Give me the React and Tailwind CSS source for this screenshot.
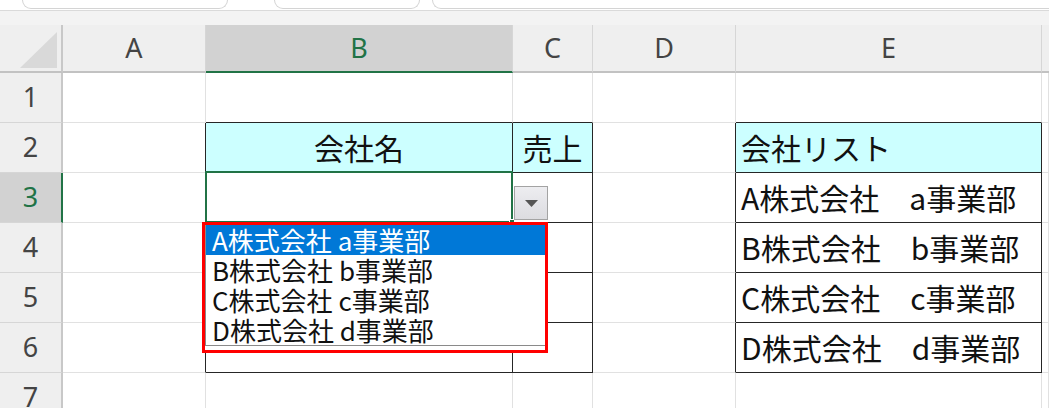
const cols = ["A", "B", "C", "D", "E"];

const companies = [
  ["A株式会社 a事業部", "A株式会社　a事業部"],
  ["B株式会社 b事業部", "B株式会社　b事業部"],
  ["C株式会社 c事業部", "C株式会社　c事業部"],
  ["D株式会社 d事業部", "D株式会社　d事業部"],
];

const grid = "grid grid-cols-[63px_143px_307px_80px_143px_306px_7px]";
const plain = "h-[50px] border-r border-b border-[#e1e1e1]";

function RowHead({ n, active }) {
  return (
    <div
      className={
        active
          ? "h-[50px] flex items-center justify-center bg-[#d2d2d2] text-[#217346] border-r-2 border-r-[#217346] border-b border-b-[#d6d6d6] text-[27px]"
          : "h-[50px] flex items-center justify-center bg-[#efefef] text-[#444] border-r-2 border-r-[#c8c8c8] border-b border-b-[#d6d6d6] text-[27px]"
      }
      style={{ fontFamily: "'Noto Sans', sans-serif" }}
    >
      {n}
    </div>
  );
}

export default function App() {
  return (
    <div className="relative w-[1049px] h-[408px] overflow-hidden bg-white font-['Noto_Sans_CJK_JP',sans-serif] text-[#111]">
      {/* top strip */}
      <div className="flex h-[10px]">
        <div className="ml-[22px] w-[206px] h-[9px] border-x border-b border-[#d4d4d4] rounded-b-[9px]" />
        <div className="ml-[46px] w-[146px] h-[9px] border-x border-b border-[#d4d4d4] rounded-b-[9px]" />
        <div className="ml-[12px] flex-1 h-[9px] border-l border-b border-[#d4d4d4] rounded-bl-[9px]" />
      </div>
      <div className="h-[15px] bg-[#f3f3f3] border-t border-[#dadada]" />

      {/* column headers */}
      <div className={grid + " h-[48px] bg-[#efefef]"} style={{ fontFamily: "'Noto Sans', sans-serif" }}>
        <div className="relative border-r-2 border-r-[#c8c8c8] border-b-2 border-b-[#c2c2c2]">
          <svg className="absolute left-0 top-0" width="63" height="46">
            <polygon points="57,7 57,43 20,43" fill="#d9d9d9" />
          </svg>
        </div>
        {cols.map((c) => (
          <div
            key={c}
            className={
              c === "B"
                ? "flex items-center justify-center text-[27px] bg-[#d2d2d2] text-[#217346] border-r border-r-[#d6d6d6] border-b-2 border-b-[#217346]"
                : "flex items-center justify-center text-[27px] text-[#444] border-r border-r-[#d6d6d6] border-b-2 border-b-[#c2c2c2]"
            }
          >
            {c}
          </div>
        ))}
        <div className="border-b-2 border-b-[#c2c2c2]" />
      </div>

      {/* row 1 */}
      <div className={grid}>
        <RowHead n={1} />
        <div className={plain} />
        <div className="h-[50px] border-r border-r-[#e1e1e1] border-b border-b-[#262626]" />
        <div className="h-[50px] border-r border-r-[#e1e1e1] border-b border-b-[#262626]" />
        <div className={plain} />
        <div className="h-[50px] border-r border-r-[#e1e1e1] border-b border-b-[#262626]" />
        <div className={plain} />
      </div>

      {/* row 2 */}
      <div className={grid + " text-[30px]"}>
        <RowHead n={2} />
        <div className="h-[50px] border-r border-r-[#262626] border-b border-b-[#e1e1e1]" />
        <div className="h-[50px] flex items-center justify-center bg-[#ccffff] border-r border-b border-[#262626]">会社名</div>
        <div className="h-[50px] flex items-center justify-center bg-[#ccffff] border-r border-b border-[#262626]">売上</div>
        <div className="h-[50px] border-r border-r-[#262626] border-b border-b-[#e1e1e1]" />
        <div className="h-[50px] flex items-center pl-[5px] bg-[#ccffff] border-r border-b border-[#262626]">会社リスト</div>
        <div className={plain} />
      </div>

      {/* rows 3-6 */}
      {companies.map(([, full], i) => (
        <div key={i} className={grid + " text-[30px]"}>
          <RowHead n={i + 3} active={i === 0} />
          <div className="h-[50px] border-r border-r-[#262626] border-b border-b-[#e1e1e1]" />
          <div className="relative h-[50px] border-r border-b border-[#262626]">
            {i === 0 && (
              <>
                <div className="absolute -left-[1px] -top-[2px] -right-[1px] -bottom-[1px] border-2 border-[#217346]" />
                <div className="absolute -right-[3px] -bottom-[3px] w-[6px] h-[6px] bg-[#217346] border border-white" />
              </>
            )}
          </div>
          <div className="h-[50px] border-r border-b border-[#262626]" />
          <div className="h-[50px] border-r border-r-[#262626] border-b border-b-[#e1e1e1]" />
          <div className="h-[50px] flex items-center pl-[5px] whitespace-nowrap border-r border-b border-[#262626]">{full}</div>
          <div className={plain} />
        </div>
      ))}

      {/* row 7 */}
      <div className={grid}>
        <RowHead n={7} />
        <div className={plain} />
        <div className={plain} />
        <div className={plain} />
        <div className={plain} />
        <div className={plain} />
        <div className={plain} />
      </div>

      {/* dropdown button */}
      <div className="absolute left-[514px] top-[186px] w-[34px] h-[34px] flex items-center justify-center bg-gradient-to-b from-[#ededf0] to-[#dcdce0] border border-[#a3a3a3]">
        <svg width="13" height="7" viewBox="0 0 13 7">
          <polygon points="0,0 13,0 6.5,7" fill="#555" />
        </svg>
      </div>

      {/* dropdown list with red highlight */}
      <div className="absolute left-[202px] top-[222px] w-[346px] border-[3px] border-[#ff0000] bg-white">
        <div className="border-l border-b border-[#8a8a8a] text-[26px] leading-[30px]">
          {companies.map(([short], i) => (
            <div
              key={i}
              className={
                i === 0
                  ? "h-[30px] pl-[6px] whitespace-nowrap bg-[#0078d7] text-white"
                  : "h-[30px] pl-[6px] whitespace-nowrap text-[#111]"
              }
            >
              {short}
            </div>
          ))}
        </div>
        <div className="h-[4px]" />
      </div>
    </div>
  );
}
